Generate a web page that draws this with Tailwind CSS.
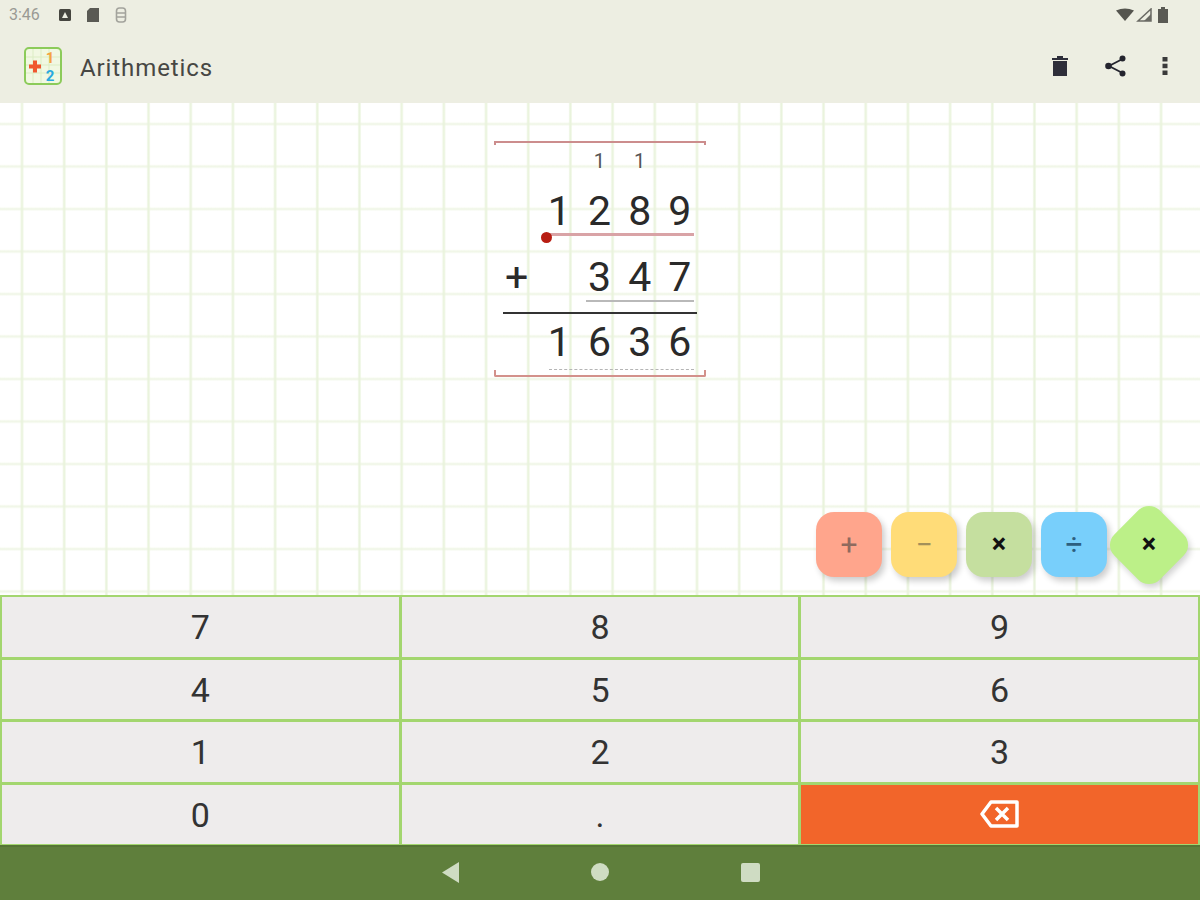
<!DOCTYPE html>
<html lang="en">

<head>
    <meta charset="UTF-8">
    <meta name="viewport" content="width=device-width, initial-scale=1.0">
    <title>Arithmetics</title>
    <script src="https://cdn.jsdelivr.net/npm/@tailwindcss/browser@4"></script>
</head>

<body class="font-['Roboto',sans-serif] w-[1200px] h-[900px] overflow-hidden flex flex-col bg-white">

    <!-- Status bar + app bar -->
    <header class="h-[103px] bg-[#edeee2] flex flex-col shrink-0">
        <div class="h-[30px] pl-[9px] pr-[31px] flex items-center justify-between text-[#9a9a94]">
            <div class="flex items-center">
                <span class="text-[16px] w-[49px]">3:46</span>
                <svg class="w-[14px] h-[14px]" viewBox="0 0 14 14"><rect x="1" y="1" width="12" height="12" rx="1.5" fill="#45453f"/><path d="M4 10 7 4l3 6z" fill="#edeee2"/></svg>
                <svg class="w-[16px] h-[16px] ml-[13px]" viewBox="0 0 16 16"><path d="M5 1h9v14H2V4z" fill="#5a5a54"/></svg>
                <svg class="w-[14px] h-[16px] ml-[13px]" viewBox="0 0 14 16" fill="none" stroke="#a3a39c" stroke-width="1.6"><rect x="2.5" y="1" width="9" height="14" rx="3"/><path d="M3 6h8M3 10h8"/></svg>
            </div>
            <div class="flex items-center gap-[2px]">
                <svg class="w-[18px] h-[14px]" viewBox="0 0 18 14"><path d="M0 2.5Q9-1.500 18 2.500L9 13z" fill="#55554f"/></svg>
                <svg class="w-[16px] h-[14px]" viewBox="0 0 16 14"><path d="M15 1v12H2z" fill="none" stroke="#6a6a64" stroke-width="1.500"/><path d="M8 13 15 6v7z" fill="#6a6a64"/></svg>
                <svg class="w-[12px] h-[16px] ml-[3px]" viewBox="0 0 12 16"><path d="M4 0h4v2h3v14H1V2h3z" fill="#5a5a54"/></svg>
            </div>
        </div>
        <div class="flex-1 pl-[24px] pr-[32px] pb-[1px] flex items-center">
            <svg class="w-[38px] h-[38px] shrink-0" viewBox="0 0 38 38">
                <rect x="1" y="1" width="36" height="36" rx="4" fill="#f1f8e2" stroke="#8ccb5a" stroke-width="2"/>
                <path d="M9 2v34M17 2v34M25 2v34M2 10h34M2 18h34M2 26h34" stroke="#dcedc4" stroke-width="1"/>
                <path d="M5 19.500h12M11 13.500v12" stroke="#f0572f" stroke-width="4"/>
                <text x="26" y="15.500" text-anchor="middle" font-size="15" font-weight="700" fill="#f5a341" font-family="Roboto">1</text>
                <text x="26" y="33.500" text-anchor="middle" font-size="15" font-weight="700" fill="#2aa9e0" font-family="Roboto">2</text>
            </svg>
            <span class="ml-[18px] pt-[3px] text-[24px] tracking-[0.9px] text-[#474744]">Arithmetics</span>
            <div class="ml-auto flex items-center">
                <svg class="w-[18px] h-[22px]" viewBox="0 0 18 22"><path d="M6 1h6v2h5v2H1V3h5zM2 6h14v15H2z" fill="#2e2e3a"/></svg>
                <svg class="w-[24px] h-[24px] ml-[35px]" viewBox="0 0 24 24" fill="#24242e" stroke="#24242e"><path d="M18.500 5 5 12l13.500 7" fill="none" stroke-width="1.800"/><circle cx="18.500" cy="4.500" r="3" stroke="none"/><circle cx="4.500" cy="12" r="3.300" stroke="none"/><circle cx="18.500" cy="19.500" r="3" stroke="none"/></svg>
                <svg class="w-[6px] h-[20px] ml-[34px]" viewBox="0 0 6 20" fill="#3a3a3a"><rect x="0.500" y="1" width="5" height="4.500"/><rect x="0.500" y="7.700" width="5" height="4.500"/><rect x="0.500" y="14.500" width="5" height="4.500"/></svg>
            </div>
        </div>
    </header>

    <!-- Squared paper -->
    <main class="relative h-[492px] shrink-0 flex justify-center bg-white bg-[linear-gradient(to_right,transparent_20px,#e9f3dc_21.500px,#e9f3dc_22.500px,transparent_24px),linear-gradient(to_bottom,transparent_19px,#f0f6e7_20.500px,#f0f6e7_21.500px,transparent_23px)] bg-[size:42.2px_42.5px]">

        <!-- Written sum -->
        <div class="w-[212px] mt-[38px] flex flex-col text-[#2a2a2a] text-center">
            <div class="h-[4px] border-x-2 border-t-2 border-[#cc8d8d]"></div>
            <div class="pl-[5px] grid grid-cols-[repeat(5,40.200px)] h-[30px] items-center text-[#555] text-[20px] leading-none pt-[1px]">
                <span></span><span></span><span>1</span><span>1</span><span></span>
            </div>
            <div class="pl-[5px] grid grid-cols-[repeat(5,40.200px)] h-[58px] items-center text-[41px] leading-none pt-[14px]">
                <span></span><span>1</span><span>2</span><span>8</span><span>9</span>
            </div>
            <div class="relative h-[3px] ml-[55px] mr-[12px] bg-[#d9a3a6]">
                <span class="absolute -left-[8px] -top-[1.500px] w-[11px] h-[11px] rounded-full bg-[#b81d12]"></span>
            </div>
            <div class="pl-[5px] grid grid-cols-[repeat(5,40.200px)] h-[64px] items-center text-[41px] leading-none pt-[18px]">
                <span class="pr-[5px]">+</span><span></span><span>3</span><span>4</span><span>7</span>
            </div>
            <div class="h-[2px] ml-[92px] mr-[12px] bg-[#b9b9b9]"></div>
            <div class="h-[2px] mt-[10px] ml-[9px] mr-[9px] bg-[#333]"></div>
            <div class="pl-[5px] grid grid-cols-[repeat(5,40.200px)] h-[55px] items-center text-[41px] leading-none pt-[2px]">
                <span></span><span>1</span><span>6</span><span>3</span><span>6</span>
            </div>
            <div class="h-0 ml-[55px] mr-[12px] border-t border-dashed border-[#b5b5b5]"></div>
            <div class="h-[7px] border-x-2 border-b-2 border-[#d3918b] rounded-b-[2px]"></div>
        </div>

        <!-- Operation buttons -->
        <div class="absolute right-[18px] bottom-[18px] flex gap-[9px] text-[30px] leading-none">
            <button class="w-[66px] h-[65px] rounded-[18px] bg-[#ffa58c] text-[#8f6a5e] shadow-[3px_4px_6px_rgba(0,0,0,0.2)]">+</button>
            <button class="w-[66px] h-[65px] rounded-[18px] bg-[#ffdc78] text-[#a3905a] shadow-[3px_4px_6px_rgba(0,0,0,0.2)]">−</button>
            <button class="w-[66px] h-[65px] rounded-[18px] bg-[#c5df9f] text-[#111] text-[27px] font-bold shadow-[3px_4px_6px_rgba(0,0,0,0.2)]">×</button>
            <button class="w-[66px] h-[65px] rounded-[18px] bg-[#78cffb] text-[#2d5f80] shadow-[3px_4px_6px_rgba(0,0,0,0.2)]">÷</button>
            <button class="w-[66px] h-[65px] flex items-center justify-center text-[#111] text-[27px] font-bold relative">
                <span class="absolute w-[64px] h-[64px] rotate-45 rounded-[15px] bg-[#bcf088] shadow-[4px_1px_6px_rgba(0,0,0,0.18)]"></span>
                <span class="relative">×</span>
            </button>
        </div>
    </main>

    <!-- Keypad -->
    <section class="h-[250px] shrink-0 grid grid-cols-3 grid-rows-4 gap-[3px] p-[2px] pb-[1px] bg-[#a3d66f] text-[34px] text-[#333]">
        <button class="bg-[#eeecec] pt-[2px]">7</button>
        <button class="bg-[#eeecec] pt-[2px]">8</button>
        <button class="bg-[#eeecec] pt-[2px]">9</button>
        <button class="bg-[#eeecec] pt-[2px]">4</button>
        <button class="bg-[#eeecec] pt-[2px]">5</button>
        <button class="bg-[#eeecec] pt-[2px]">6</button>
        <button class="bg-[#eeecec] pt-[2px]">1</button>
        <button class="bg-[#eeecec] pt-[2px]">2</button>
        <button class="bg-[#eeecec] pt-[2px]">3</button>
        <button class="bg-[#eeecec] pt-[2px]">0</button>
        <button class="bg-[#eeecec] pt-[2px]">.</button>
        <button class="bg-[#f2652a] flex items-center justify-center">
            <svg class="w-[40px] h-[30px]" viewBox="0 0 40 30" fill="none" stroke="#fff" stroke-width="3.500"><path d="M11 3h26v24H11L2 15z" stroke-linejoin="round"/><path d="M16 9l12 12M28 9 16 21"/></svg>
        </button>
    </section>

    <!-- Navigation bar -->
    <nav class="flex-1 bg-[#5f7f3c] border-t-2 border-[#557535] pb-[3px] flex items-center justify-center gap-[132px]">
        <svg class="w-[18px] h-[21px]" viewBox="0 0 18 21"><path d="M18 0v21L1 10.500z" fill="#cfdcc3"/></svg>
        <svg class="w-[18px] h-[18px]" viewBox="0 0 18 18"><circle cx="9" cy="9" r="9" fill="#cfdcc3"/></svg>
        <svg class="w-[19px] h-[19px]" viewBox="0 0 19 19"><rect width="19" height="19" rx="2" fill="#cfdcc3"/></svg>
    </nav>

</body>

</html>
